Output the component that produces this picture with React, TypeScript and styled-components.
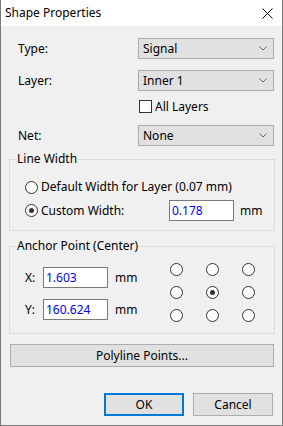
import React from "react";
import styled, { createGlobalStyle } from "styled-components";

const tekster = {
  tittel: "Shape Properties",
  type: "Type:",
  layer: "Layer:",
  allLayers: "All Layers",
  net: "Net:",
  lineWidth: "Line Width",
  defaultWidth: "Default Width for Layer (0.07 mm)",
  customWidth: "Custom Width:",
  anchor: "Anchor Point (Center)",
  polyline: "Polyline Points...",
  ok: "OK",
  cancel: "Cancel",
  mm: "mm",
};

const GlobalStyle = createGlobalStyle`
  html, body {
    margin: 0;
    padding: 0;
    background: #ffffff;
  }
  body {
    font-family: "Noto Sans", "Open Sans", sans-serif;
    font-size: 12px;
    line-height: 16px;
    color: #000000;
  }
`;

const Window = styled.div`
  width: 283px;
  height: 426px;
  box-sizing: border-box;
  border: 1px solid #7a7a7a;
  border-top: none;
  background: #f0f0f0;
  display: flex;
  flex-direction: column;
`;

const TitleBar = styled.div`
  height: 26px;
  flex: none;
  background: #ffffff;
  display: flex;
  align-items: center;
  justify-content: space-between;
  padding: 0 9px 0 4px;
`;

const CloseIcon = () => (
  <svg width="11" height="11" viewBox="0 0 11 11">
    <path d="M0.5 0.5 L10.5 10.5 M10.5 0.5 L0.5 10.5" stroke="#000" strokeWidth="1" />
  </svg>
);

const Body = styled.div`
  flex: 1;
  display: flex;
  flex-direction: column;
  padding-top: 12px;
`;

const FormRow = styled.div<{ $gap?: number }>`
  display: grid;
  grid-template-columns: 120px 136px;
  align-items: center;
  margin-left: 17px;
  margin-top: ${(p) => p.$gap ?? 0}px;
`;

const SelectBox = styled.div`
  height: 21px;
  box-sizing: border-box;
  border: 1px solid #adadad;
  background: #e1e1e1;
  display: flex;
  align-items: center;
  justify-content: space-between;
  padding: 0 6px 0 4px;
`;

const Chevron = () => (
  <svg width="8" height="5" viewBox="0 0 8 5">
    <path d="M0.5 0.5 L4 4 L7.5 0.5" stroke="#666" strokeWidth="1" fill="none" />
  </svg>
);

const Select = ({ value }: { value: string }) => (
  <SelectBox>
    <span>{value}</span>
    <Chevron />
  </SelectBox>
);

const CheckLabel = styled.label`
  display: flex;
  align-items: center;
  gap: 3px;
  height: 13px;
  margin-left: 1px;
`;

const CheckBox = styled.span`
  width: 13px;
  height: 13px;
  box-sizing: border-box;
  border: 1px solid #333333;
  background: #ffffff;
`;

const GroupBox = styled.fieldset<{ $gap: number }>`
  margin: ${(p) => p.$gap}px 7px 0 8px;
  padding: 0;
  border: 1px solid #dcdcdc;
  min-width: 0;
`;

const Legend = styled.legend`
  margin-left: 6px;
  padding: 0 1px;
  line-height: 16px;
`;

const LineWidthContent = styled.div`
  padding: 12px 0 9px 15px;
  display: flex;
  flex-direction: column;
  gap: 8px;
`;

const RadioRow = styled.div<{ $height: number }>`
  display: grid;
  grid-template-columns: 144px 65px auto;
  align-items: center;
  height: ${(p) => p.$height}px;
`;

const RadioLabel = styled.span`
  display: flex;
  align-items: center;
  gap: 3px;
  white-space: nowrap;
`;

const RadioCircle = styled.span<{ $checked?: boolean }>`
  width: 13px;
  height: 13px;
  box-sizing: border-box;
  border: 1px solid #333333;
  border-radius: 50%;
  background: #ffffff;
  display: flex;
  align-items: center;
  justify-content: center;
  flex: none;
  &::after {
    content: "";
    display: ${(p) => (p.$checked ? "block" : "none")};
    width: 5px;
    height: 5px;
    border-radius: 50%;
    background: #333333;
  }
`;

const TextInput = styled.div<{ $width: number }>`
  width: ${(p) => p.$width}px;
  height: 21px;
  box-sizing: border-box;
  border: 1px solid #7a7a7a;
  background: #ffffff;
  color: #0000ff;
  display: flex;
  align-items: center;
  padding-left: 2px;
`;

const Unit = styled.span<{ $gap: number }>`
  margin-left: ${(p) => p.$gap}px;
`;

const AnchorContent = styled.div`
  display: flex;
  align-items: flex-start;
  padding: 9px 0 11px 15px;
`;

const CoordColumn = styled.div`
  display: flex;
  flex-direction: column;
  gap: 11px;
  margin-top: 4px;
  width: 145px;
`;

const CoordRow = styled.div`
  display: flex;
  align-items: center;
`;

const CoordLabel = styled.span`
  width: 18px;
`;

const AnchorGrid = styled.div`
  display: grid;
  grid-template-columns: repeat(3, 13px);
  grid-auto-rows: 13px;
  column-gap: 23px;
  row-gap: 10px;
`;

const WideButton = styled.div`
  margin: 10px 8px 0 9px;
  height: 23px;
  box-sizing: border-box;
  border: 1px solid #adadad;
  background: #e1e1e1;
  display: flex;
  align-items: center;
  justify-content: center;
`;

const Footer = styled.div`
  display: flex;
  justify-content: flex-end;
  gap: 9px;
  margin: 26px 9px 0 0;
`;

const DialogButton = styled.div<{ $default?: boolean }>`
  width: 80px;
  height: 23px;
  box-sizing: border-box;
  border: ${(p) => (p.$default ? "2px solid #0078d7" : "1px solid #adadad")};
  background: #e1e1e1;
  display: flex;
  align-items: center;
  justify-content: center;
`;

const ankerPunkter = [false, false, false, false, true, false, false, false, false];

const App = () => (
  <>
    <GlobalStyle />
    <Window>
      <TitleBar>
        <span>{tekster.tittel}</span>
        <CloseIcon />
      </TitleBar>
      <Body>
        <FormRow>
          <span>{tekster.type}</span>
          <Select value="Signal" />
        </FormRow>
        <FormRow $gap={11}>
          <span>{tekster.layer}</span>
          <Select value="Inner 1" />
        </FormRow>
        <FormRow $gap={9}>
          <span />
          <CheckLabel>
            <CheckBox />
            <span>{tekster.allLayers}</span>
          </CheckLabel>
        </FormRow>
        <FormRow $gap={12}>
          <span>{tekster.net}</span>
          <Select value="None" />
        </FormRow>

        <GroupBox $gap={5}>
          <Legend>{tekster.lineWidth}</Legend>
          <LineWidthContent>
            <RadioRow $height={13}>
              <RadioLabel>
                <RadioCircle />
                {tekster.defaultWidth}
              </RadioLabel>
            </RadioRow>
            <RadioRow $height={21}>
              <RadioLabel>
                <RadioCircle $checked />
                {tekster.customWidth}
              </RadioLabel>
              <TextInput $width={65}>0.178</TextInput>
              <Unit $gap={6}>{tekster.mm}</Unit>
            </RadioRow>
          </LineWidthContent>
        </GroupBox>

        <GroupBox $gap={7}>
          <Legend>{tekster.anchor}</Legend>
          <AnchorContent>
            <CoordColumn>
              <CoordRow>
                <CoordLabel>X:</CoordLabel>
                <TextInput $width={65}>1.603</TextInput>
                <Unit $gap={7}>{tekster.mm}</Unit>
              </CoordRow>
              <CoordRow>
                <CoordLabel>Y:</CoordLabel>
                <TextInput $width={65}>160.624</TextInput>
                <Unit $gap={7}>{tekster.mm}</Unit>
              </CoordRow>
            </CoordColumn>
            <AnchorGrid>
              {ankerPunkter.map((valgt, index) => (
                <RadioCircle key={index} $checked={valgt} />
              ))}
            </AnchorGrid>
          </AnchorContent>
        </GroupBox>

        <WideButton>{tekster.polyline}</WideButton>

        <Footer>
          <DialogButton $default>{tekster.ok}</DialogButton>
          <DialogButton>{tekster.cancel}</DialogButton>
        </Footer>
      </Body>
    </Window>
  </>
);

export default App;
